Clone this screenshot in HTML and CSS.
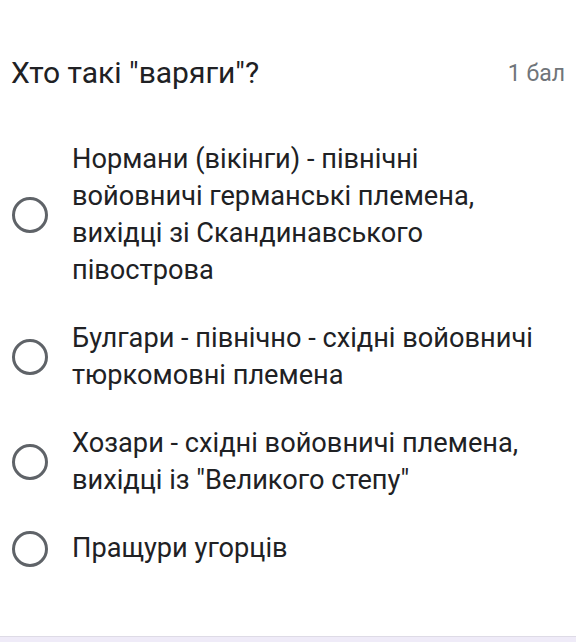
FILE: index.html
```html
<!DOCTYPE html>
<html lang="uk">
<head>
<meta charset="utf-8">
<link rel="stylesheet" href="styles.css">
</head>
<body>
<main class="card">
  <div class="head">
    <div class="title">Хто такі "варяги"?</div>
    <div class="points">1 бал</div>
  </div>
  <div class="options">
    <label class="option"><span class="radio"></span><span class="text">Нормани (вікінги) - північні войовничі германські племена, вихідці зі Скандинавського півострова</span></label>
    <label class="option"><span class="radio"></span><span class="text">Булгари - північно - східні войовничі тюркомовні племена</span></label>
    <label class="option"><span class="radio"></span><span class="text">Хозари - східні войовничі племена, вихідці із "Великого степу"</span></label>
    <label class="option"><span class="radio"></span><span class="text">Пращури угорців</span></label>
  </div>
</main>
<div class="band"></div>
</body>
</html>
```
FILE: styles.css
```css
html, body {
  margin: 0;
  padding: 0;
  background: #ffffff;
}
body {
  font-family: Roboto, "Noto Sans", sans-serif;
  color: #202124;
}
.card {
  height: 636px;
  box-sizing: border-box;
  padding: 55px 11px 0 11px;
}
.head {
  display: flex;
  justify-content: space-between;
  align-items: center;
  height: 36px;
}
.title {
  font-size: 30px;
  line-height: 36px;
}
.points {
  font-size: 23px;
  color: #70757a;
}
.options {
  margin-top: 50px;
  display: flex;
  flex-direction: column;
  gap: 31px;
}
.option {
  display: flex;
  align-items: center;
  gap: 24px;
}
.radio {
  flex: none;
  width: 36px;
  height: 36px;
  box-sizing: border-box;
  border: 3px solid #5f6368;
  border-radius: 50%;
  margin-left: 1px;
}
.text {
  font-size: 27.2px;
  line-height: 37px;
  max-width: 475px;
}
.band {
  height: 6px;
  background: #efebf8;
  border-top: 1px solid #dedbe6;
}
```
